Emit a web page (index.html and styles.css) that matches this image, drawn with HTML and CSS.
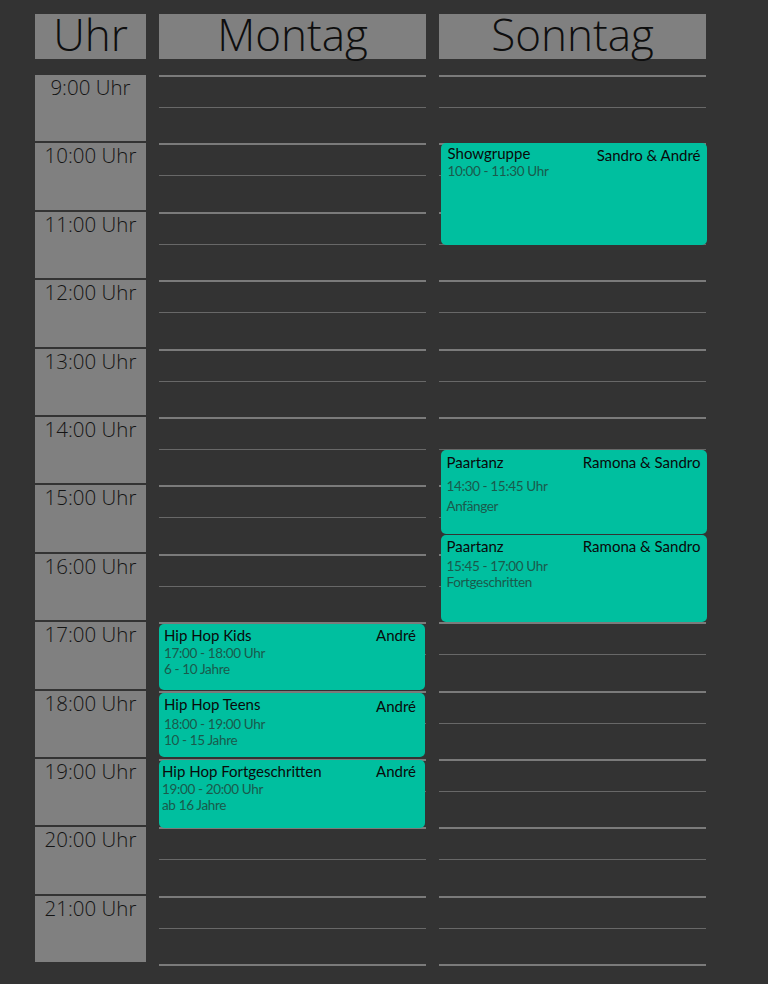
FILE: index.html
```html
<!DOCTYPE html>
<html lang="de">
<head>
<meta charset="utf-8">
<title>Stundenplan</title>
<link rel="stylesheet" href="styles.css">
</head>
<body>
<div class="schedule">
  <div class="head head--time">Uhr</div>
  <div class="head">Montag</div>
  <div class="head">Sonntag</div>

  <div class="times">
    <div class="time">9:00 Uhr</div>
    <div class="time">10:00 Uhr</div>
    <div class="time">11:00 Uhr</div>
    <div class="time">12:00 Uhr</div>
    <div class="time">13:00 Uhr</div>
    <div class="time">14:00 Uhr</div>
    <div class="time">15:00 Uhr</div>
    <div class="time">16:00 Uhr</div>
    <div class="time">17:00 Uhr</div>
    <div class="time">18:00 Uhr</div>
    <div class="time">19:00 Uhr</div>
    <div class="time">20:00 Uhr</div>
    <div class="time">21:00 Uhr</div>
  </div>

  <div class="day">
    <div class="slot"></div><div class="slot"></div><div class="slot"></div><div class="slot"></div>
    <div class="slot"></div><div class="slot"></div><div class="slot"></div><div class="slot"></div>
    <div class="slot"></div><div class="slot"></div><div class="slot"></div><div class="slot"></div>
    <div class="slot"></div>

    <div class="event event--left" style="top:548.5px;height:66.5px">
      <div class="event-head"><span class="event-title">Hip Hop Kids</span><span class="event-coach">André</span></div>
      <div class="event-meta">17:00 - 18:00 Uhr</div>
      <div class="event-meta">6 - 10 Jahre</div>
    </div>
    <div class="event event--left" style="top:617.5px;height:64.5px">
      <div class="event-head"><span class="event-title">Hip Hop Teens</span><span class="event-coach event-coach--low">André</span></div>
      <div class="event-meta">18:00 - 19:00 Uhr</div>
      <div class="event-meta">10 - 15 Jahre</div>
    </div>
    <div class="event event--left event--tight" style="top:685px;height:68px">
      <div class="event-head"><span class="event-title">Hip Hop Fortgeschritten</span><span class="event-coach">André</span></div>
      <div class="event-meta">19:00 - 20:00 Uhr</div>
      <div class="event-meta">ab 16 Jahre</div>
    </div>
  </div>

  <div class="day">
    <div class="slot"></div><div class="slot"></div><div class="slot"></div><div class="slot"></div>
    <div class="slot"></div><div class="slot"></div><div class="slot"></div><div class="slot"></div>
    <div class="slot"></div><div class="slot"></div><div class="slot"></div><div class="slot"></div>
    <div class="slot"></div>

    <div class="event event--right event--top" style="top:67.5px;height:102px">
      <div class="event-head"><span class="event-title">Showgruppe</span><span class="event-coach event-coach--low">Sandro &amp; André</span></div>
      <div class="event-meta">10:00 - 11:30 Uhr</div>
    </div>
    <div class="event event--right event--loose" style="top:375px;height:84px">
      <div class="event-head"><span class="event-title">Paartanz</span><span class="event-coach">Ramona &amp; Sandro</span></div>
      <div class="event-meta">14:30 - 15:45 Uhr</div>
      <div class="event-meta">Anfänger</div>
    </div>
    <div class="event event--right event--mid" style="top:460px;height:86.5px">
      <div class="event-head"><span class="event-title">Paartanz</span><span class="event-coach">Ramona &amp; Sandro</span></div>
      <div class="event-meta">15:45 - 17:00 Uhr</div>
      <div class="event-meta">Fortgeschritten</div>
    </div>
  </div>
</div>
</body>
</html>
```

FILE: styles.css
```css
* { box-sizing: border-box; }

html, body {
  margin: 0;
  background: #333333;
}

.schedule {
  display: grid;
  grid-template-columns: 111px 267px 267px;
  column-gap: 13px;
  row-gap: 16px;
  padding: 14px 0 0 35px;
  align-items: start;
}

.head {
  height: 45px;
  background: #808080;
  color: #0e0e0e;
  font-family: "Open Sans", sans-serif;
  font-weight: 300;
  font-size: 44px;
  line-height: 41px;
  text-align: center;
}

.times {
  display: flex;
  flex-direction: column;
}

.time {
  height: 66.4px;
  margin-bottom: 2px;
  background: #808080;
  color: #141414;
  font-family: "Open Sans", sans-serif;
  font-weight: 300;
  font-size: 20.5px;
  line-height: 24px;
  text-align: center;
}

.day {
  position: relative;
  border-bottom: 2px solid #7b7b7b;
}

.slot {
  position: relative;
  height: 68.4px;
  border-top: 2px solid #7b7b7b;
}

.slot::after {
  content: "";
  position: absolute;
  left: 0;
  right: 0;
  top: 30px;
  height: 1px;
  background: #686868;
}

.event {
  position: absolute;
  background: #00bf9f;
  border-radius: 5px;
  padding: 3px 9px 0 5px;
  font-family: "Lato", sans-serif;
  color: #0a0a0a;
}

.event--left { left: 0; right: 1px; }
.event--right { left: 1.5px; right: -0.5px; padding-left: 6px; padding-right: 6px; }
.event--top { padding-left: 7px; padding-top: 2px; }
.event--tight { padding-left: 3px; }

.event-head {
  display: flex;
  justify-content: space-between;
  align-items: flex-start;
}

.event-title,
.event-coach {
  font-size: 15px;
  line-height: 17px;
}

.event-coach--low { padding-top: 2px; }

.event-meta {
  font-size: 13.5px;
  line-height: 16px;
  letter-spacing: -0.35px;
  color: #1a5a4c;
}

.event-head + .event-meta { margin-top: 1px; }
.event--top .event-head + .event-meta { margin-top: -1px; }

.event--loose { padding-top: 4px; }
.event--loose .event-head + .event-meta { margin-top: 5px; }
.event--loose .event-meta { line-height: 20px; }

.event--mid .event-head + .event-meta { margin-top: 3px; }
```
